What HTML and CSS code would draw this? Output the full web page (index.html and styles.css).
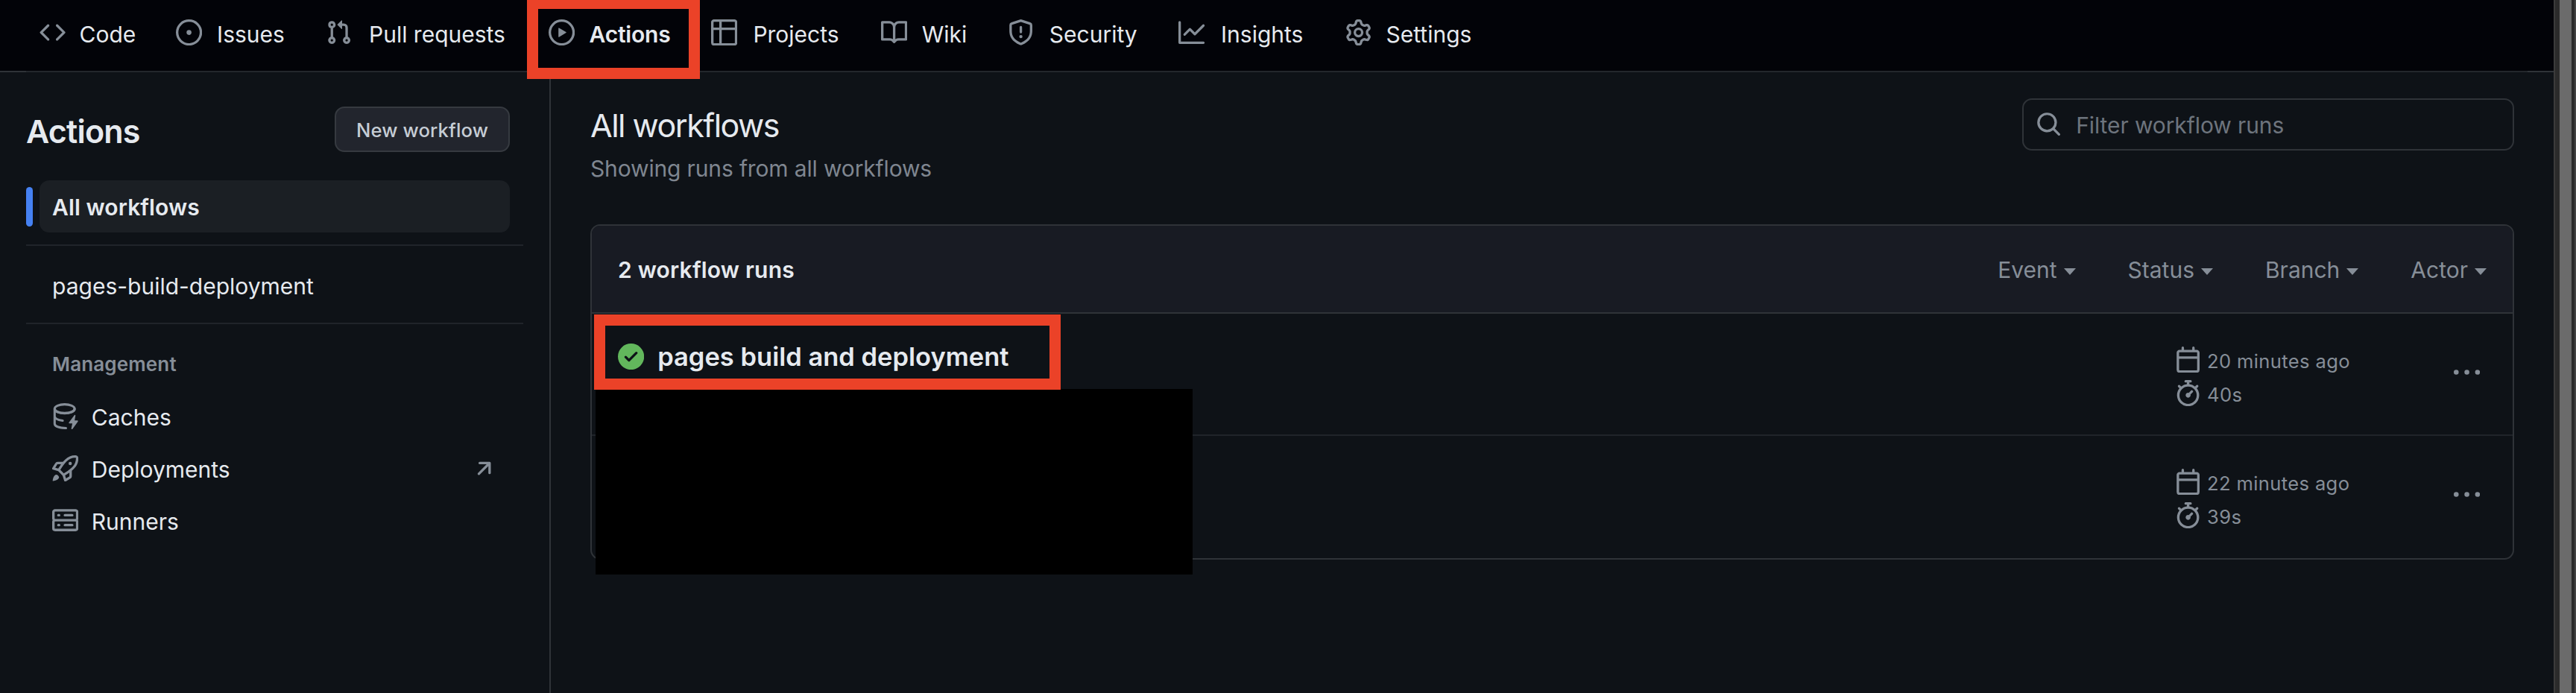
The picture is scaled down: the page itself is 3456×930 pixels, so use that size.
FILE: index.html
```html
<!DOCTYPE html>
<html lang="en">
<head>
<meta charset="utf-8">
<title>Actions</title>
<link rel="stylesheet" href="styles.css">
</head>
<body>
<div class="page">
  <div class="view">
    <nav class="topnav">
      <a class="tab"><svg class="icon" viewBox="0 0 16 16"><path d="m11.28 3.22 4.25 4.25a.75.75 0 0 1 0 1.06l-4.25 4.25a.749.749 0 0 1-1.275-.326.749.749 0 0 1 .215-.734L13.94 8l-3.72-3.72a.749.749 0 0 1 .326-1.275.749.749 0 0 1 .734.215Zm-6.56 0a.751.751 0 0 1 1.042.018.751.751 0 0 1 .018 1.042L2.06 8l3.72 3.72a.749.749 0 0 1-.326 1.275.749.749 0 0 1-.734-.215L.47 8.53a.75.75 0 0 1 0-1.06Z"/></svg><span>Code</span></a>
      <a class="tab"><svg class="icon" viewBox="0 0 16 16"><path d="M8 9.5a1.5 1.5 0 1 0 0-3 1.5 1.5 0 0 0 0 3Z"/><path d="M8 0a8 8 0 1 1 0 16A8 8 0 0 1 8 0ZM1.5 8a6.5 6.5 0 1 0 13 0 6.5 6.5 0 0 0-13 0Z"/></svg><span>Issues</span></a>
      <a class="tab"><svg class="icon" viewBox="0 0 16 16"><path d="M1.5 3.25a2.25 2.25 0 1 1 3 2.122v5.256a2.251 2.251 0 1 1-1.5 0V5.372A2.25 2.25 0 0 1 1.5 3.25Zm5.677-.177L9.573.677A.25.25 0 0 1 10 .854V2.5h1A2.5 2.5 0 0 1 13.5 5v5.628a2.251 2.251 0 1 1-1.5 0V5a1 1 0 0 0-1-1h-1v1.646a.25.25 0 0 1-.427.177L7.177 3.427a.25.25 0 0 1 0-.354ZM3.75 2.5a.75.75 0 1 0 0 1.5.75.75 0 0 0 0-1.5Zm0 9.5a.75.75 0 1 0 0 1.5.75.75 0 0 0 0-1.5Zm8.25.75a.75.75 0 1 0 1.5 0 .75.75 0 0 0-1.5 0Z"/></svg><span>Pull requests</span></a>
      <a class="tab tab-current"><svg class="icon" viewBox="0 0 16 16"><path d="M8 0a8 8 0 1 1 0 16A8 8 0 0 1 8 0ZM1.5 8a6.5 6.5 0 1 0 13 0 6.5 6.5 0 0 0-13 0Zm4.879-2.773 4.264 2.559a.25.25 0 0 1 0 .428l-4.264 2.559A.25.25 0 0 1 6 10.559V5.442a.25.25 0 0 1 .379-.215Z"/></svg><span>Actions</span></a>
      <a class="tab"><svg class="icon" viewBox="0 0 16 16"><path d="M0 1.75C0 .784.784 0 1.75 0h12.5C15.216 0 16 .784 16 1.75v12.5A1.75 1.75 0 0 1 14.25 16H1.75A1.75 1.75 0 0 1 0 14.25ZM6.5 6.5v8h7.75a.25.25 0 0 0 .25-.25V6.5Zm8-1.5V1.75a.25.25 0 0 0-.25-.25H6.5V5Zm-13 1.5v7.75c0 .138.112.25.25.25H5v-8ZM5 5V1.5H1.75a.25.25 0 0 0-.25.25V5Z"/></svg><span>Projects</span></a>
      <a class="tab"><svg class="icon" viewBox="0 0 16 16"><path d="M0 1.75A.75.75 0 0 1 .75 1h4.253c1.227 0 2.317.59 3 1.501A3.743 3.743 0 0 1 11.006 1h4.245a.75.75 0 0 1 .75.75v10.5a.75.75 0 0 1-.75.75h-4.507a2.25 2.25 0 0 0-1.591.659l-.622.621a.75.75 0 0 1-1.06 0l-.622-.621A2.25 2.25 0 0 0 5.258 13H.75a.75.75 0 0 1-.75-.75Zm7.251 10.324.004-5.073-.002-2.253A2.25 2.25 0 0 0 5.003 2.5H1.5v9h3.757a3.75 3.75 0 0 1 1.994.574ZM8.755 4.75l-.004 7.322a3.752 3.752 0 0 1 1.992-.572H14.5v-9h-3.495a2.25 2.25 0 0 0-2.25 2.25Z"/></svg><span>Wiki</span></a>
      <a class="tab"><svg class="icon" viewBox="0 0 16 16"><path d="M7.467.133a1.748 1.748 0 0 1 1.066 0l5.25 1.68A1.75 1.75 0 0 1 15 3.48V7c0 1.566-.32 3.182-1.303 4.682-.983 1.498-2.585 2.813-5.032 3.855a1.697 1.697 0 0 1-1.33 0c-2.447-1.042-4.049-2.357-5.032-3.855C1.32 10.182 1 8.566 1 7V3.48a1.75 1.75 0 0 1 1.217-1.667Zm.61 1.429a.25.25 0 0 0-.153 0l-5.25 1.68a.25.25 0 0 0-.174.238V7c0 1.358.275 2.666 1.057 3.86.784 1.194 2.121 2.34 4.366 3.297a.196.196 0 0 0 .154 0c2.245-.956 3.582-2.104 4.366-3.298C13.225 9.666 13.5 8.36 13.5 7V3.48a.251.251 0 0 0-.174-.237l-5.25-1.68ZM8.75 4.75v3a.75.75 0 0 1-1.5 0v-3a.75.75 0 0 1 1.5 0ZM9 10.5a1 1 0 1 1-2 0 1 1 0 0 1 2 0Z"/></svg><span>Security</span></a>
      <a class="tab"><svg class="icon" viewBox="0 0 16 16"><path d="M1.5 1.75V13.5h13.75a.75.75 0 0 1 0 1.5H.75a.75.75 0 0 1-.75-.75V1.75a.75.75 0 0 1 1.5 0Zm14.28 2.53-5.25 5.25a.75.75 0 0 1-1.06 0L7 7.06 4.28 9.78a.751.751 0 0 1-1.042-.018.751.751 0 0 1-.018-1.042l3.25-3.25a.75.75 0 0 1 1.06 0L10 7.94l4.72-4.72a.751.751 0 0 1 1.042.018.751.751 0 0 1 .018 1.042Z"/></svg><span>Insights</span></a>
      <a class="tab"><svg class="icon" viewBox="0 0 16 16"><path d="M8 0a8.2 8.2 0 0 1 .701.031C9.444.095 9.99.645 10.16 1.29l.288 1.107c.018.066.079.158.212.224.231.114.454.243.668.386.123.082.233.09.299.071l1.103-.303c.644-.176 1.392.021 1.82.63.27.385.506.792.704 1.218.315.675.111 1.422-.364 1.891l-.814.806c-.049.048-.098.147-.088.294.016.257.016.515 0 .772-.01.147.038.246.088.294l.814.806c.475.469.679 1.216.364 1.891a7.977 7.977 0 0 1-.704 1.217c-.428.61-1.176.807-1.82.63l-1.102-.302c-.067-.019-.177-.011-.3.071a5.909 5.909 0 0 1-.668.386c-.133.066-.194.158-.211.224l-.29 1.106c-.168.646-.715 1.196-1.458 1.26a8.006 8.006 0 0 1-1.402 0c-.743-.064-1.289-.614-1.458-1.26l-.289-1.106c-.018-.066-.079-.158-.212-.224a5.738 5.738 0 0 1-.668-.386c-.123-.082-.233-.09-.299-.071l-1.103.303c-.644.176-1.392-.021-1.82-.63a8.12 8.12 0 0 1-.704-1.218c-.315-.675-.111-1.422.363-1.891l.815-.806c.05-.048.098-.147.088-.294a6.214 6.214 0 0 1 0-.772c.01-.147-.038-.246-.088-.294l-.815-.806C.635 6.045.431 5.298.746 4.623a7.92 7.92 0 0 1 .704-1.217c.428-.61 1.176-.807 1.82-.63l1.102.302c.067.019.177.011.3-.071.214-.143.437-.272.668-.386.133-.066.194-.158.211-.224l.29-1.106C6.009.645 6.556.095 7.299.03 7.53.01 7.764 0 8 0Zm-.571 1.525c-.036.003-.108.036-.137.146l-.289 1.105c-.147.561-.549.967-.998 1.189-.173.086-.34.183-.5.29-.417.278-.97.423-1.529.27l-1.103-.303c-.109-.03-.175.016-.195.045-.22.312-.412.644-.573.99-.014.031-.021.11.059.19l.815.806c.411.406.562.957.53 1.456a4.709 4.709 0 0 0 0 .582c.032.499-.119 1.05-.53 1.456l-.815.806c-.081.08-.073.159-.059.19.162.346.353.677.573.989.02.03.085.076.195.046l1.102-.303c.56-.153 1.113-.008 1.53.27.161.107.328.204.501.29.447.222.85.629.997 1.189l.289 1.105c.029.109.101.143.137.146a6.6 6.6 0 0 0 1.142 0c.036-.003.108-.036.137-.146l.289-1.105c.147-.561.549-.967.998-1.189.173-.086.34-.183.5-.29.417-.278.97-.423 1.529-.27l1.103.303c.109.029.175-.016.195-.045.22-.313.411-.644.573-.99.014-.031.021-.11-.059-.19l-.815-.806c-.411-.406-.562-.957-.53-1.456a4.709 4.709 0 0 0 0-.582c-.032-.499.119-1.05.53-1.456l.815-.806c.081-.08.073-.159.059-.19a6.464 6.464 0 0 0-.573-.989c-.02-.03-.085-.076-.195-.046l-1.102.303c-.56.153-1.113.008-1.53-.27a4.44 4.44 0 0 0-.501-.29c-.447-.222-.85-.629-.997-1.189l-.289-1.105c-.029-.11-.101-.143-.137-.146a6.6 6.6 0 0 0-1.142 0ZM11 8a3 3 0 1 1-6 0 3 3 0 0 1 6 0ZM9.5 8a1.5 1.5 0 1 0-3.001.001A1.5 1.5 0 0 0 9.5 8Z"/></svg><span>Settings</span></a>
    </nav>
    <div class="body">
      <aside class="sidebar">
        <div class="side-head"><h2 class="side-title">Actions</h2><button class="new-btn"><span>New workflow</span></button></div>
        <a class="all-item"><i class="marker"></i><span class="all-pill"><span>All workflows</span></span></a>
        <hr class="rule rule-first">
        <a class="wf-item"><span>pages-build-deployment</span></a>
        <hr class="rule">
        <h3 class="group"><span>Management</span></h3>
        <a class="side-link"><svg class="icon" viewBox="0 0 16 16" ><g fill="none" stroke="currentColor" stroke-width="1.4" stroke-linecap="round"><ellipse cx="7.6" cy="3.4" rx="6.1" ry="2.65"/><path d="M1.5 3.5v9c0 1.5 2.5 2.6 6.9 2.75M1.5 8c0 1.4 2 2.4 4.9 2.7M1.5 3.5c0 1.6 2.8 2.7 6.1 2.7s6.1-1.1 6.1-2.7"/></g><path d="m13.6 7.3-3.4 4.5c-.2.3 0 .6.3.6h1.8l-.6 3c-.1.5.4.7.7.4l3.3-4.6c.2-.3 0-.6-.3-.6h-1.7l.5-2.9c.1-.5-.4-.7-.6-.4Z"/></svg><span>Caches</span></a>
        <a class="side-link"><svg class="icon" viewBox="0 0 16 16"><path d="M14.064 0h.186C15.216 0 16 .784 16 1.75v.186a8.752 8.752 0 0 1-2.564 6.186l-.458.459c-.314.314-.641.616-.979.904v3.207c0 .608-.315 1.172-.833 1.49l-2.774 1.707a.749.749 0 0 1-1.11-.418l-.954-3.102a1.214 1.214 0 0 1-.145-.125L3.754 9.816a1.218 1.218 0 0 1-.124-.145L.528 8.717a.749.749 0 0 1-.418-1.11l1.71-2.774A1.748 1.748 0 0 1 3.31 4h3.204c.288-.338.59-.665.904-.979l.459-.458A8.749 8.749 0 0 1 14.064 0ZM8.938 3.623h-.002l-.458.458c-.76.76-1.437 1.598-2.02 2.5l-1.5 2.317 2.143 2.143 2.317-1.5c.902-.583 1.74-1.26 2.499-2.02l.459-.458a7.25 7.25 0 0 0 2.123-5.127V1.75a.25.25 0 0 0-.25-.25h-.186a7.249 7.249 0 0 0-5.125 2.123ZM3.56 14.56c-.732.732-2.334 1.045-3.005 1.148a.234.234 0 0 1-.201-.064.234.234 0 0 1-.064-.201c.103-.671.416-2.273 1.15-3.003a1.502 1.502 0 1 1 2.12 2.12Zm6.94-3.935c-.088.06-.177.118-.266.175l-2.35 1.521.548 1.783 1.949-1.2a.25.25 0 0 0 .119-.213ZM3.678 8.116 5.2 5.766c.058-.09.117-.178.176-.266H3.309a.25.25 0 0 0-.213.119l-1.2 1.95ZM12 5a1 1 0 1 1-2 0 1 1 0 0 1 2 0Z"/></svg><span>Deployments</span><svg class="icon ext" viewBox="0 0 16 16"><path d="M4.53 4.75A.75.75 0 0 1 5.28 4h6.01a.75.75 0 0 1 .75.75v6.01a.75.75 0 0 1-1.5 0v-4.2l-5.26 5.261a.749.749 0 0 1-1.275-.326.749.749 0 0 1 .215-.734L9.48 5.5h-4.2a.75.75 0 0 1-.75-.75Z"/></svg></a>
        <a class="side-link"><svg class="icon" viewBox="0 0 16 16"><path d="M1.75 1h12.5c.966 0 1.75.784 1.75 1.75v4c0 .372-.116.717-.314 1 .198.283.314.628.314 1v4a1.75 1.75 0 0 1-1.75 1.75H1.75A1.75 1.75 0 0 1 0 12.75v-4c0-.358.109-.707.314-1a1.739 1.739 0 0 1-.314-1v-4C0 1.784.784 1 1.75 1ZM1.5 2.75v4c0 .138.112.25.25.25h12.5a.25.25 0 0 0 .25-.25v-4a.25.25 0 0 0-.25-.25H1.75a.25.25 0 0 0-.25.25Zm.25 5.75a.25.25 0 0 0-.25.25v4c0 .138.112.25.25.25h12.5a.25.25 0 0 0 .25-.25v-4a.25.25 0 0 0-.25-.25ZM7 4.75A.75.75 0 0 1 7.75 4h4.5a.75.75 0 0 1 0 1.5h-4.5A.75.75 0 0 1 7 4.75ZM7.75 10h4.5a.75.75 0 0 1 0 1.5h-4.5a.75.75 0 0 1 0-1.5ZM3 4.75A.75.75 0 0 1 3.75 4h.5a.75.75 0 0 1 0 1.5h-.5A.75.75 0 0 1 3 4.75ZM3.75 10h.5a.75.75 0 0 1 0 1.5h-.5a.75.75 0 0 1 0-1.5Z"/></svg><span>Runners</span></a>
      </aside>
      <main class="main">
        <header class="main-head">
          <div><h1 class="title"><span>All workflows</span></h1><p class="subtitle"><span>Showing runs from all workflows</span></p></div>
          <div class="search"><svg class="icon" viewBox="0 0 16 16"><path d="M10.68 11.74a6 6 0 0 1-7.922-8.982 6 6 0 0 1 8.982 7.922l3.04 3.04a.749.749 0 0 1-.326 1.275.749.749 0 0 1-.734-.215ZM11.5 7a4.499 4.499 0 1 0-8.997 0A4.499 4.499 0 0 0 11.5 7Z"/></svg><span>Filter workflow runs</span></div>
        </header>
        <section class="runs">
          <div class="runs-head"><strong>2 workflow runs</strong>
            <div class="filters"><span class="filter">Event</span><span class="filter">Status</span><span class="filter">Branch</span><span class="filter">Actor</span></div>
          </div>
          <div class="run">
            <div class="run-name"><svg class="icon ok" viewBox="0 0 16 16"><path d="M8 16A8 8 0 1 1 8 0a8 8 0 0 1 0 16Zm3.78-9.72a.751.751 0 0 0-.018-1.042.751.751 0 0 0-1.042-.018L6.75 9.19 5.28 7.72a.751.751 0 0 0-1.042.018.751.751 0 0 0-.018 1.042l2 2a.75.75 0 0 0 1.06 0Z"/></svg><span>pages build and deployment</span></div>
            <div class="meta">
              <div class="meta-line"><svg class="icon" viewBox="0 0 16 16"><path d="M4.75 0a.75.75 0 0 1 .75.75V2h5V.75a.75.75 0 0 1 1.5 0V2h1.25c.966 0 1.75.784 1.75 1.75v10.5A1.75 1.75 0 0 1 13.25 16H2.75A1.75 1.75 0 0 1 1 14.25V3.75C1 2.784 1.784 2 2.75 2H4V.75A.75.75 0 0 1 4.75 0ZM2.5 7.5v6.75c0 .138.112.25.25.25h10.5a.25.25 0 0 0 .25-.25V7.5Zm10.75-4H2.75a.25.25 0 0 0-.25.25V6h11V3.75a.25.25 0 0 0-.25-.25Z"/></svg><span>20 minutes ago</span></div>
              <div class="meta-line"><svg class="icon" viewBox="0 0 16 16"><path d="M5.75.75A.75.75 0 0 1 6.5 0h3a.75.75 0 0 1 0 1.5h-.75v1l-.001.041a6.724 6.724 0 0 1 3.464 1.435l.007-.006.75-.75a.749.749 0 0 1 1.275.326.749.749 0 0 1-.215.734l-.75.75-.006.007a6.75 6.75 0 1 1-10.548 0L2.72 5.03l-.75-.75a.751.751 0 0 1 .018-1.042.751.751 0 0 1 1.042-.018l.75.75.007.006A6.72 6.72 0 0 1 7.25 2.541V1.5H6.5a.75.75 0 0 1-.75-.75ZM8 14.5a5.25 5.25 0 1 0-.001-10.501A5.25 5.25 0 0 0 8 14.5Zm.389-6.7 1.33-1.33a.75.75 0 1 1 1.061 1.06L9.45 8.861A1.503 1.503 0 0 1 8 10.75a1.499 1.499 0 1 1 .389-2.95Z"/></svg><span>40s</span></div>
            </div>
            <svg class="icon" viewBox="0 0 16 16"><path d="M8 9a1.5 1.5 0 1 0 0-3 1.5 1.5 0 0 0 0 3ZM1.5 9a1.5 1.5 0 1 0 0-3 1.5 1.5 0 0 0 0 3Zm13 0a1.5 1.5 0 1 0 0-3 1.5 1.5 0 0 0 0 3Z"/></svg>
          </div>
          <div class="run">
            <div class="run-name"></div>
            <div class="meta">
              <div class="meta-line"><svg class="icon" viewBox="0 0 16 16"><path d="M4.75 0a.75.75 0 0 1 .75.75V2h5V.75a.75.75 0 0 1 1.5 0V2h1.25c.966 0 1.75.784 1.75 1.75v10.5A1.75 1.75 0 0 1 13.25 16H2.75A1.75 1.75 0 0 1 1 14.25V3.75C1 2.784 1.784 2 2.75 2H4V.75A.75.75 0 0 1 4.75 0ZM2.5 7.5v6.75c0 .138.112.25.25.25h10.5a.25.25 0 0 0 .25-.25V7.5Zm10.75-4H2.75a.25.25 0 0 0-.25.25V6h11V3.75a.25.25 0 0 0-.25-.25Z"/></svg><span>22 minutes ago</span></div>
              <div class="meta-line"><svg class="icon" viewBox="0 0 16 16"><path d="M5.75.75A.75.75 0 0 1 6.5 0h3a.75.75 0 0 1 0 1.5h-.75v1l-.001.041a6.724 6.724 0 0 1 3.464 1.435l.007-.006.75-.75a.749.749 0 0 1 1.275.326.749.749 0 0 1-.215.734l-.75.75-.006.007a6.75 6.75 0 1 1-10.548 0L2.72 5.03l-.75-.75a.751.751 0 0 1 .018-1.042.751.751 0 0 1 1.042-.018l.75.75.007.006A6.72 6.72 0 0 1 7.25 2.541V1.5H6.5a.75.75 0 0 1-.75-.75ZM8 14.5a5.25 5.25 0 1 0-.001-10.501A5.25 5.25 0 0 0 8 14.5Zm.389-6.7 1.33-1.33a.75.75 0 1 1 1.061 1.06L9.45 8.861A1.503 1.503 0 0 1 8 10.75a1.499 1.499 0 1 1 .389-2.95Z"/></svg><span>39s</span></div>
            </div>
            <svg class="icon" viewBox="0 0 16 16"><path d="M8 9a1.5 1.5 0 1 0 0-3 1.5 1.5 0 0 0 0 3ZM1.5 9a1.5 1.5 0 1 0 0-3 1.5 1.5 0 0 0 0 3Zm13 0a1.5 1.5 0 1 0 0-3 1.5 1.5 0 0 0 0 3Z"/></svg>
          </div>
        </section>
      </main>
    </div>
  </div>
  <div class="scrollbar"><div class="thumb"></div></div>
  <div class="callout callout-tab"></div>
  <div class="redaction"></div>
  <div class="callout callout-run"></div>
</div>
</body>
</html>
```

FILE: styles.css
```css
* { box-sizing: border-box; }
body { margin: 0; background: #0e1217; color: #e6eaef; font-family: Inter, "Liberation Sans", sans-serif; font-size: 30px; line-height: 44px; }
h1, h2, h3, p { margin: 0; }
.page { position: relative; display: flex; width: 3456px; height: 930px; overflow: hidden; }
.view { flex: 1; display: flex; flex-direction: column; }
.icon { display: block; flex: none; width: 35.2px; height: 35.2px; fill: currentColor; color: #868e98; }
span, strong { white-space: nowrap; }

.topnav { display: grid; grid-template-columns: 183.2px 201px 299px 218px 228px 170px 229.5px 223.5px 224px; height: 97px; padding: 0 0 10px 52.8px; background: linear-gradient(90deg, #2f3338 35px, #23272c 35px, #23272c 3391px, #2f3338 3391px) 0 100% / 100% 2px no-repeat #020308; }
.tab { display: flex; align-items: center; gap: 17.6px; padding-right: 52.8px; }
.tab span { flex: 1; display: flex; justify-content: center; padding-top: 4px; letter-spacing: 0; }
.tab-current span { font-weight: 600; letter-spacing: -0.2px; }

.body { flex: 1; display: flex; }
.sidebar { width: 739px; border-right: 2px solid #2f3338; padding: 46px 35px 0; }
.side-head { display: flex; justify-content: space-between; align-items: center; height: 61px; padding-right: 18px; }
.side-title { padding-top: 4px; font-size: 43px; font-weight: 600; letter-spacing: -0.8px; }
.new-btn { width: 235px; height: 61px; padding: 1px 0 0; border: 2px solid #363a40; border-radius: 13px; background: #22252d; color: #c6cdd5; font: 500 25.6px Inter, sans-serif; letter-spacing: 0.15px; }
.all-item { display: flex; align-items: center; margin-top: 38px; padding-right: 18px; }
.marker { width: 9px; height: 53px; margin-right: 9px; border-radius: 5px; background: #4581f2; }
.all-pill { flex: 1; height: 70px; padding: 14px 17px; border-radius: 13px; background: #1b1f24; font-weight: 600; letter-spacing: 0.1px; }
.rule { width: 667px; height: 2px; margin: 0; border: 0; background: #20242a; }
.rule-first { margin-top: 16px; }
.wf-item { display: block; height: 103px; padding: 32px 35px; }
.group { height: 88px; padding: 32px 0 0 35px; font-size: 26px; font-weight: 600; color: #868e98; letter-spacing: 0.15px; }
.side-link { display: flex; align-items: center; gap: 17.6px; height: 70.4px; padding: 0 35px; }
.side-link span { padding-top: 3px; }
.ext { margin-left: auto; }

.main { flex: 1; padding: 35px 53px 0; }
.main-head { display: flex; justify-content: space-between; height: 169px; }
.title { padding-top: 3px; font-size: 43px; font-weight: 400; line-height: 66px; letter-spacing: -1.5px; }
.subtitle { margin-top: 3px; color: #7f8690; letter-spacing: -0.15px; }
.search { display: flex; align-items: center; gap: 19px; width: 660px; height: 70px; padding: 0 16px; border: 2px solid #2f3338; border-radius: 13px; color: #6d747d; letter-spacing: -0.1px; }
.search span { padding-top: 2px; }
.runs { height: 450px; border: 2px solid #2f3338; border-radius: 13px; overflow: hidden; }
.runs-head { display: flex; justify-content: space-between; align-items: center; height: 118px; padding: 2px 35px 0; background: #181b23; border-bottom: 2px solid #2f3338; }
.runs-head strong { font-weight: 600; letter-spacing: 0.2px; }
.filters { display: flex; color: #868e98; gap: 70px; }
.filter { display: flex; align-items: center; gap: 9px; }
.filter::after { content: ""; margin-top: 4px; border: 8px solid transparent; border-top: 9px solid #868e98; border-bottom: 0; }
.run { display: flex; align-items: flex-start; height: 162px; padding-right: 44px; color: #868e98; }
.run + .run { height: 166px; border-top: 2px solid #20242a; }
.run-name { flex: 1; display: flex; align-items: center; gap: 18px; height: 73px; padding: 42px 0 0 35px; font-size: 34.5px; font-weight: 600; color: #e6eaef; }
.ok { color: #62b75c; }
.meta { width: 374px; padding-top: 44px; font-size: 25.6px; line-height: 45px; letter-spacing: 0.35px; }
.meta-line { display: flex; align-items: flex-start; height: 45px; gap: 8px; }
.meta-line span { line-height: 39px; }
.run > .icon { margin-top: 62px; }

.scrollbar { width: 30px; padding-left: 6px; background: #2b2b2b; border-left: 2px solid #3b3b3b; border-right: 2px solid #444; }
.thumb { width: 16px; height: 100%; background: #6b6b6b; }

.callout { position: absolute; border: 15px solid #eb4228; }
.callout-tab { left: 707px; top: -3px; width: 232px; height: 109px; }
.callout-run { left: 797px; top: 422px; width: 626px; height: 101px; }
.redaction { position: absolute; left: 799px; top: 522px; width: 801px; height: 249px; background: #000; }
```
